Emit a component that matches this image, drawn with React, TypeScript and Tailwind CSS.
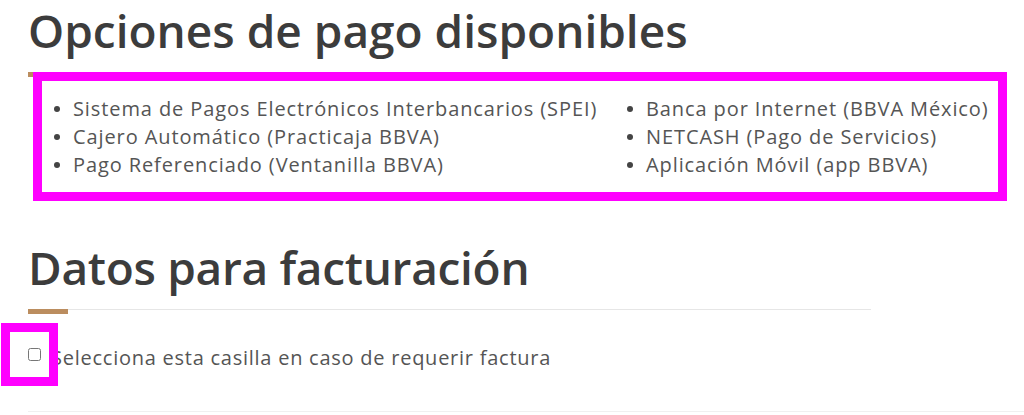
import React from "react";

const leftItems = [
  "Sistema de Pagos Electrónicos Interbancarios (SPEI)",
  "Cajero Automático (Practicaja BBVA)",
  "Pago Referenciado (Ventanilla BBVA)",
];

const rightItems = [
  "Banca por Internet (BBVA México)",
  "NETCASH (Pago de Servicios)",
  "Aplicación Móvil (app BBVA)",
];

function Divider() {
  return (
    <div className="flex items-start w-[843px]">
      <div className="w-[40px] h-[5px] bg-[#bb8d5f]" />
      <div className="flex-1 h-px bg-[#e6e6e6]" />
    </div>
  );
}

function BulletList({ items }: { items: string[] }) {
  return (
    <ul className="flex flex-col">
      {items.map((t) => (
        <li key={t} className="flex items-center h-[28px] whitespace-nowrap">
          <span className="w-[6px] h-[6px] rounded-full bg-[#444444] shrink-0" />
          <span className="ml-[13px]">{t}</span>
        </li>
      ))}
    </ul>
  );
}

export default function App() {
  return (
    <div
      className="relative w-[1024px] h-[415px] overflow-hidden bg-white"
      style={{ fontFamily: '"Open Sans", "Liberation Sans", sans-serif' }}
    >
      <div className="pl-[28px] pt-[2px]">
        <h2 className="text-[46px] leading-[56px] font-semibold text-[#3c3c3c]">
          Opciones de pago disponibles
        </h2>
        <div className="mt-[14px]">
          <Divider />
        </div>
        <div className="mt-[18px] pl-[26px] grid grid-cols-[573px_auto] text-[20px] tracking-[0.9px] text-[#555555]">
          <BulletList items={leftItems} />
          <BulletList items={rightItems} />
        </div>

        <h2 className="mt-[60px] text-[46px] leading-[56px] font-semibold tracking-[-0.3px] text-[#3c3c3c]">
          Datos para facturación
        </h2>
        <div className="mt-[14px]">
          <Divider />
        </div>
        <label className="mt-[30px] flex items-start text-[20px] leading-[28px] tracking-[0.75px] text-[#555555]">
          <input
            type="checkbox"
            className="m-0 mt-[4px] w-[13px] h-[13px] shrink-0"
          />
          <span className="ml-[10px]">
            Selecciona esta casilla en caso de requerir factura
          </span>
        </label>
        <div className="mt-[39px] h-px bg-[#f0f0f0]" />
      </div>

      {/* highlight frames */}
      <div className="absolute left-[33px] top-[72px] w-[974px] h-[129px] border-[9px] border-[#ff00ff] pointer-events-none" />
      <div className="absolute left-[1px] top-[323px] w-[57px] h-[63px] border-[9px] border-[#ff00ff] pointer-events-none" />
    </div>
  );
}
